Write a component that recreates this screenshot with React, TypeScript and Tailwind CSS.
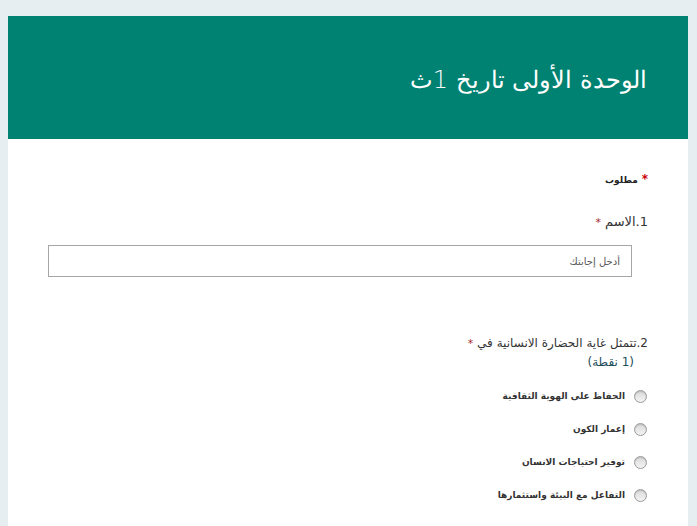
import React from "react";

const options = [
  "الحفاظ على الهوية الثقافية",
  "إعمار الكون",
  "توفير احتياجات الانسان",
  "التفاعل مع البيئة واستثمارها",
];

function Radio() {
  return (
    <span className="inline-block w-[13px] h-[13px] rounded-full border border-[#9a9a9a] bg-gradient-to-b from-[#d9d9d9] to-[#f4f4f4] shadow-[inset_0_1px_1px_rgba(0,0,0,0.15)]" />
  );
}

export default function App() {
  return (
    <div
      className="min-h-[526px] bg-[#e6eef1] pt-4 pl-2 pr-[9px] overflow-hidden"
      style={{ fontFamily: '"Segoe UI", Tahoma, "DejaVu Sans", sans-serif' }}
    >
      <div dir="rtl" className="bg-white min-h-[510px]">
        <div className="h-[123px] bg-[#008272] flex items-center pr-[41px]">
          <h1 className="text-[24px] font-light text-white leading-none pt-1">
            الوحدة الأولى تاريخ 1ث
          </h1>
        </div>

        <div className="pr-[40px] pl-[40px]">
          <p className="pt-[32px] text-[9px] font-bold text-[#222] leading-4">
            <span className="text-[#c00] ml-1 text-[12px]">*</span>
            مطلوب
          </p>

          <p className="mt-[24px] text-[13px] text-[#333] leading-5">
            1.الاسم <span className="text-[#a4262c] text-[11px]">*</span>
          </p>

          <div className="mt-[12px] mr-[16px] h-[32px] border border-[#a6a6a6] flex items-center pr-[11px]">
            <span className="text-[10px] text-[#555]">أدخل إجابتك</span>
          </div>

          <div className="mt-[57px] text-[12px] text-[#333] leading-[19px]">
            <p>
              2.تتمثل غاية الحضارة الانسانية في{" "}
              <span className="text-[#a4262c] text-[11px]">*</span>
            </p>
            <p className="pr-[14px] text-[#1e4e5c]">(1 نقطة)</p>
          </div>

          <div className="mt-[17px] flex flex-col gap-[19px]">
            {options.map((o) => (
              <label key={o} className="flex items-center gap-[9px] pr-[1px]">
                <Radio />
                <span className="text-[9px] font-bold text-[#333] leading-[14px]">
                  {o}
                </span>
              </label>
            ))}
          </div>
        </div>
      </div>
    </div>
  );
}
